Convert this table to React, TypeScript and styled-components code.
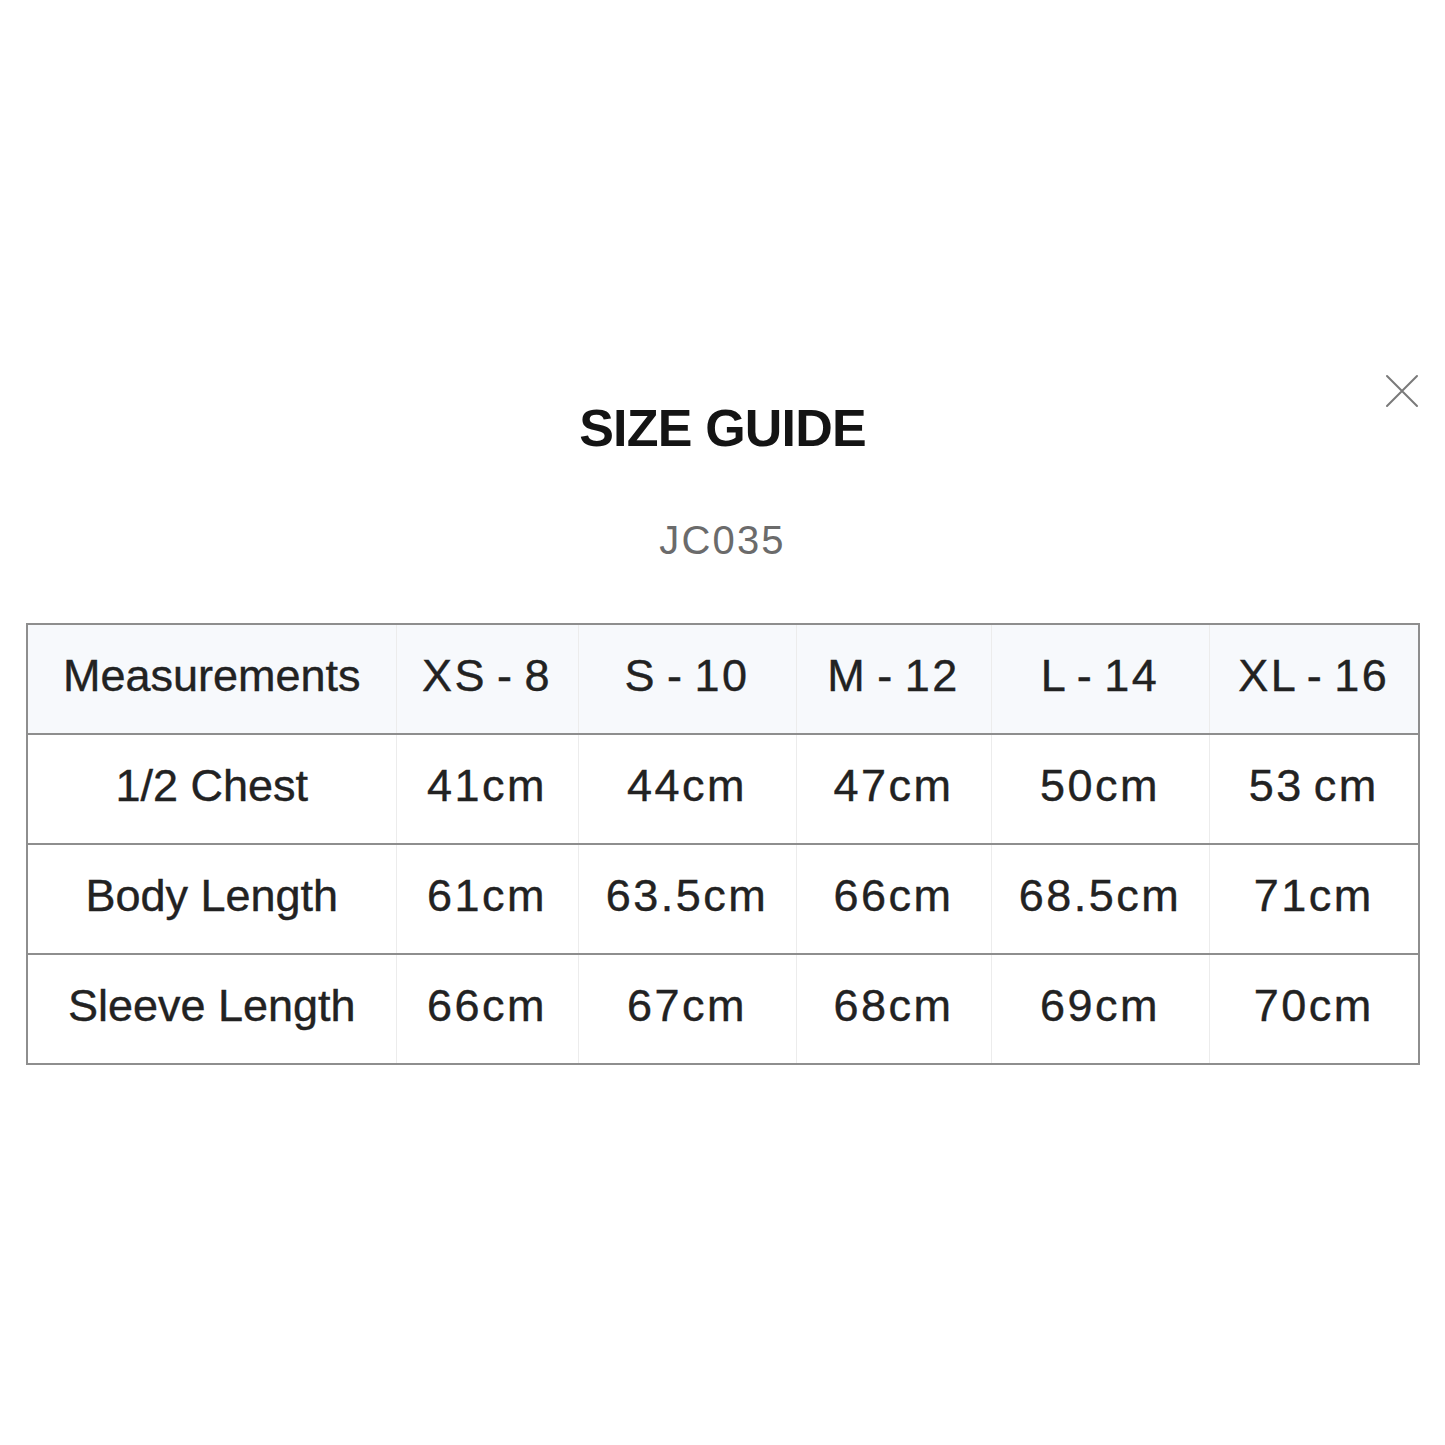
import React from 'react';
import styled, { createGlobalStyle } from 'styled-components';

const GlobalStyle = createGlobalStyle`
  body {
    margin: 0;
    background: #ffffff;
    font-family: 'Liberation Sans', Arial, sans-serif;
    color: #1f1f1f;
  }
`;

const sizes: string[] = ['XS - 8', 'S - 10', 'M - 12', 'L - 14', 'XL - 16'];

const rows: { label: string; values: string[] }[] = [
  { label: '1/2 Chest', values: ['41cm', '44cm', '47cm', '50cm', '53 cm'] },
  { label: 'Body Length', values: ['61cm', '63.5cm', '66cm', '68.5cm', '71cm'] },
  { label: 'Sleeve Length', values: ['66cm', '67cm', '68cm', '69cm', '70cm'] },
];

const colWidths: number[] = [369, 182, 218, 195, 218, 210];

export default function App() {
  return (
    <>
      <GlobalStyle />
      <Page>
        <Header>
          <Title>SIZE GUIDE</Title>
          <CloseButton aria-label="Close">
            <svg width="34" height="34" viewBox="0 0 34 34" fill="none">
              <path
                d="M2 2 L32 32 M32 2 L2 32"
                stroke="#7a7a7a"
                strokeWidth="2"
                strokeLinecap="round"
              />
            </svg>
          </CloseButton>
        </Header>
        <ProductCode>JC035</ProductCode>
        <Table>
          <colgroup>
            {colWidths.map((w, i) => (
              <Col key={i} $width={w} />
            ))}
          </colgroup>
          <thead>
            <HeadRow>
              <Cell $spaced={false}>Measurements</Cell>
              {sizes.map((s) => (
                <Cell key={s} $spaced>
                  {s}
                </Cell>
              ))}
            </HeadRow>
          </thead>
          <tbody>
            {rows.map((row) => (
              <BodyRow key={row.label}>
                <Cell $spaced={false}>{row.label}</Cell>
                {row.values.map((v, i) => (
                  <Cell key={i} $spaced>
                    {v}
                  </Cell>
                ))}
              </BodyRow>
            ))}
          </tbody>
        </Table>
      </Page>
    </>
  );
}

const Page = styled.div`
  padding: 397px 26px 0;
  display: flex;
  flex-direction: column;
  align-items: stretch;
`;

const Header = styled.div`
  position: relative;
  display: flex;
  justify-content: center;
`;

const Title = styled.h1`
  margin: 0;
  font-size: 52px;
  line-height: 62px;
  font-weight: 700;
  letter-spacing: -0.8px;
  color: #141414;
`;

const CloseButton = styled.button`
  position: absolute;
  right: 0;
  top: -23px;
  width: 34px;
  height: 34px;
  padding: 0;
  border: none;
  background: transparent;
  display: flex;
  cursor: pointer;
`;

const ProductCode = styled.div`
  margin-top: 57px;
  text-align: center;
  font-size: 40px;
  line-height: 48px;
  letter-spacing: 2.2px;
  color: #6b6b6b;
`;

const Table = styled.table`
  margin-top: 59px;
  width: 100%;
  border-collapse: collapse;
  table-layout: fixed;
  border: 2px solid #8e8e8e;
`;

const Col = styled.col<{ $width: number }>`
  width: ${(p) => p.$width}px;
`;

const HeadRow = styled.tr`
  background: #f7f9fc;
`;

const BodyRow = styled.tr`
  background: #ffffff;
  border-top: 2px solid #8e8e8e;
`;

const Cell = styled.td<{ $spaced: boolean }>`
  height: 101px;
  padding: 0 0 7px;
  text-align: center;
  vertical-align: middle;
  font-size: 45px;
  letter-spacing: ${(p) => (p.$spaced ? '2.5px' : '0')};
  word-spacing: ${(p) => (p.$spaced ? '-5px' : '0')};
  -webkit-text-stroke: 0.4px #222222;
  white-space: nowrap;
  color: #222222;
  border-left: 1px solid #ececec;

  &:first-child {
    border-left: none;
  }
`;
